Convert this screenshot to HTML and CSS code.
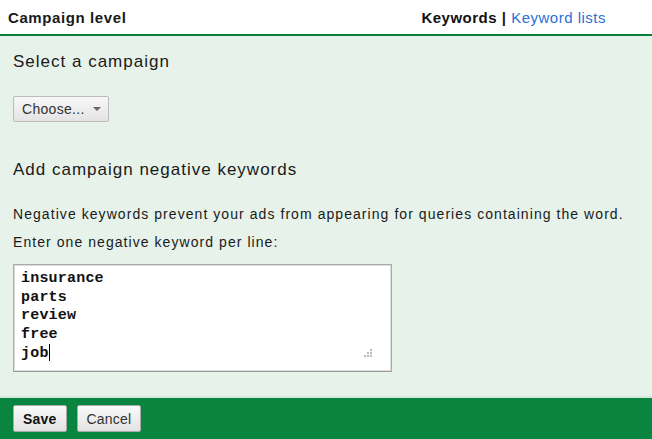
FILE: index.html
```html
<!DOCTYPE html>
<html lang="en">
  <head>
    <meta charset="utf-8" />
    <title>Campaign negative keywords</title>
    <link rel="stylesheet" href="styles.css">
  </head>
  <body>
    <div class="header">
      <span class="level">Campaign level</span>
      <span class="tabs"><strong>Keywords</strong> <span class="sep">|</span> <a href="#">Keyword lists</a></span>
    </div>

    <div class="panel">
      <h2>Select a campaign</h2>
      <button class="choose">Choose... <span class="arrow"></span></button>

      <h2 class="second">Add campaign negative keywords</h2>
      <p>Negative keywords prevent your ads from appearing for queries containing the word.<br>
      Enter one negative keyword per line:</p>

      <div class="box">
        <div class="kw">insurance<br>parts<br>review<br>free<br>job<span class="caret"></span></div>
        <svg class="grip" width="10" height="10" viewBox="0 0 10 10">
          <rect x="7" y="1" width="2" height="2" fill="#bbb"/>
          <rect x="4" y="4" width="2" height="2" fill="#bbb"/>
          <rect x="7" y="4" width="2" height="2" fill="#bbb"/>
          <rect x="1" y="7" width="2" height="2" fill="#bbb"/>
          <rect x="4" y="7" width="2" height="2" fill="#bbb"/>
          <rect x="7" y="7" width="2" height="2" fill="#bbb"/>
        </svg>
      </div>
    </div>

    <div class="footer">
      <button class="btn save">Save</button>
      <button class="btn">Cancel</button>
    </div>
  </body>
</html>
```

FILE: styles.css
```css
body {
  margin: 0;
  width: 652px;
  height: 439px;
  font-family: "Liberation Sans", Arial, sans-serif;
  color: #1a1a1a;
  background: #fff;
  overflow: hidden;
}
.header {
  display: flex;
  justify-content: space-between;
  align-items: center;
  height: 34px;
  padding: 0 46px 0 8px;
  font-size: 15px;
  letter-spacing: 0.5px;
  border-bottom: 2px solid #0a7f3c;
}
.level {
  font-weight: bold;
  letter-spacing: 0.6px;
}
.tabs strong {
  color: #111;
}
.sep {
  font-weight: bold;
}
.tabs a {
  color: #2a6fd6;
  text-decoration: none;
}
.panel {
  background: #e6f2ea;
  height: 339px;
  padding: 16px 13px 5px;
  border-bottom: 2px solid #d2e8d9;
}
h2 {
  font-size: 17px;
  line-height: 20px;
  font-weight: normal;
  letter-spacing: 1px;
  margin: 0 0 24px;
}
h2.second {
  margin: 38px 0 20px;
}
.choose {
  display: flex;
  align-items: center;
  gap: 8px;
  width: 96px;
  height: 26px;
  padding: 0 9px 0 8px;
  font-family: inherit;
  font-size: 14px;
  letter-spacing: 0.3px;
  color: #333;
  background: linear-gradient(#f8f8f8, #e4e4e4);
  border: 1px solid #bcbcbc;
  border-radius: 2px;
}
.arrow {
  width: 0;
  height: 0;
  border-left: 4px solid transparent;
  border-right: 4px solid transparent;
  border-top: 4px solid #666;
}
p {
  font-size: 14px;
  line-height: 28px;
  letter-spacing: 1.06px;
  margin: 0 0 8px;
}
.box {
  position: relative;
  width: 377px;
  height: 106px;
  background: #fff;
  border: 1px solid #aaa;
  border-bottom-color: #999;
  box-shadow: inset 0 0 0 1px #ddd;
}
.kw {
  padding: 5px 0 0 7px;
  font-family: "Liberation Mono", "Courier New", monospace;
  font-weight: bold;
  font-size: 15px;
  line-height: 18.6px;
  letter-spacing: 0.2px;
  color: #111;
}
.caret {
  display: inline-block;
  width: 1px;
  height: 17px;
  background: #000;
  vertical-align: -4px;
}
.grip {
  position: absolute;
  right: 18px;
  bottom: 13px;
}
.footer {
  display: flex;
  gap: 10px;
  align-items: center;
  height: 41px;
  padding: 0 13px;
  background: #0a8540;
}
.btn {
  height: 27px;
  padding: 0 9px;
  font-family: inherit;
  font-size: 14px;
  letter-spacing: 0.2px;
  color: #333;
  background: linear-gradient(#fafafa, #e2e2e2);
  border: 1px solid #aaa;
  border-radius: 2px;
}
.save {
  font-weight: bold;
  color: #111;
}
```
